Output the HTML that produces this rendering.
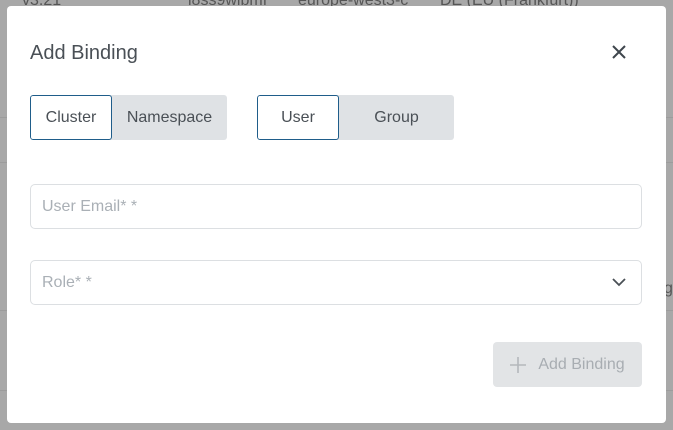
<!DOCTYPE html>
<html><head><meta charset="utf-8"><style>
*{box-sizing:border-box;margin:0;padding:0}
body{width:673px;height:430px;overflow:hidden;background:#a8a8a8;font-family:"Liberation Sans",sans-serif;position:relative}
.bgt{position:absolute;color:#555;font-size:16px}
.line{position:absolute;left:0;right:0;height:1px;background:#9c9c9c}
.modal{position:absolute;left:7px;top:6px;width:659px;height:417px;background:#fff;border-radius:4px}
.title{position:absolute;left:23px;top:36px;font-size:20px;color:#4a5056}
.close{position:absolute;left:604px;top:38px}
.tg{position:absolute;top:89px;height:45px;display:flex;border-radius:3px;background:#dfe2e5;overflow:hidden}
.tg div{height:45px;display:flex;align-items:center;justify-content:center;font-size:16px;color:#4a5056}
.tg .on{background:#fff;border:1px solid #1f5d8a;border-radius:3px}
.inp{position:absolute;left:23px;width:612px;height:45px;border:1px solid #dcdfe2;border-radius:5px;font-size:16px;color:#aab0b6;padding-left:11px;display:flex;align-items:center}
.btn{position:absolute;left:486px;top:336px;width:149px;height:45px;background:#e2e4e6;border-radius:4px;color:#a8adb2;font-size:16px;display:flex;align-items:center;justify-content:center;gap:12px}
</style></head><body>
<div class="bgt" style="left:22px;top:-8px">v3.21</div>
<div class="bgt" style="left:188px;top:-8px">l8ss9wlbmf</div>
<div class="bgt" style="left:298px;top:-8px">europe-west3-c</div>
<div class="bgt" style="left:440px;top:-8px">DE (EU (Frankfurt))</div>
<div class="bgt" style="left:664px;top:280px">g</div>
<div class="line" style="top:117px"></div>
<div class="line" style="top:162px"></div>
<div class="line" style="top:310px"></div>
<div class="line" style="top:390px"></div>
<div class="modal">
<div class="title">Add Binding</div>
<svg class="close" width="16" height="16" viewBox="0 0 16 16"><path d="M2 2L14 14M14 2L2 14" stroke="#3f464d" stroke-width="2" fill="none"/></svg>
<div class="tg" style="left:23px;width:197px"><div class="on" style="width:82px">Cluster</div><div style="width:115px">Namespace</div></div>
<div class="tg" style="left:250px;width:197px"><div class="on" style="width:82px">User</div><div style="width:115px">Group</div></div>
<div class="inp" style="top:178px">User Email* *</div>
<div class="inp" style="top:254px">Role* *
<svg style="position:absolute;left:581px;top:17px" width="14" height="9" viewBox="0 0 14 9"><path d="M1 1L7 7L13 1" stroke="#4a5056" stroke-width="1.8" fill="none"/></svg></div>
<div class="btn"><svg width="16" height="16" viewBox="0 0 16 16"><path d="M8 0V16M0 8H16" stroke="#b4b8bc" stroke-width="1.6"/></svg>Add Binding</div>
</div>
</body></html>
